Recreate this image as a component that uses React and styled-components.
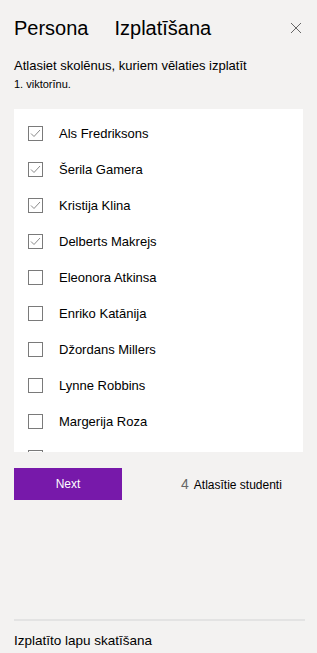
import styled, { createGlobalStyle } from 'styled-components';

const GlobalStyle = createGlobalStyle`
    html, body {
        margin: 0;
        padding: 0;
        background: #f3f2f1;
    }
    body {
        font-family: "Liberation Sans", Arial, sans-serif;
        color: #000;
    }
`;

const Panel = styled.div`
    width: 317px;
    height: 653px;
    box-sizing: border-box;
    background: #f3f2f1;
    display: flex;
    flex-direction: column;
    padding: 0 14px;
    overflow: hidden;
`;

const Header = styled.div`
    display: flex;
    align-items: center;
    height: 50px;
    box-sizing: border-box;
    padding-top: 6px;
`;

const Tab = styled.span`
    font-size: 20px;
    margin-right: 26px;
`;

const CloseButton = styled.button`
    margin-left: auto;
    margin-right: 1px;
    background: none;
    border: none;
    padding: 0;
    width: 12px;
    height: 12px;
    display: flex;
    cursor: pointer;
`;

const Intro = styled.p`
    font-size: 13px;
    margin: 7px 0 0;
    line-height: 18px;
`;

const Small = styled.p`
    font-size: 11px;
    margin: 0;
    line-height: 18px;
`;

const ListBox = styled.div`
    margin-top: 16px;
    height: 343px;
    flex-shrink: 0;
    background: #fff;
    overflow: hidden;
    padding-top: 6px;
    box-sizing: border-box;
`;

const Row = styled.label`
    display: flex;
    align-items: center;
    height: 36px;
    padding-left: 14px;
    font-size: 13px;
`;

const Box = styled.span`
    width: 15px;
    height: 15px;
    box-sizing: border-box;
    border: 1px solid #7a7a7a;
    margin-right: 16px;
    display: flex;
    align-items: center;
    justify-content: center;
`;

const Footer = styled.div`
    display: flex;
    align-items: center;
    margin-top: 16px;
`;

const NextButton = styled.button`
    width: 108px;
    height: 32px;
    background: #7719aa;
    color: #fff;
    border: none;
    font-family: inherit;
    font-size: 12px;
`;

const Count = styled.div`
    margin-left: 59px;
    font-size: 12px;
    display: flex;
    align-items: baseline;
`;

const Num = styled.span`
    color: #666;
    font-size: 14px;
    margin-right: 5px;
`;

const Bottom = styled.div`
    margin-top: auto;
    border-top: 2px solid #e3e3e3;
    margin-right: -2px;
    padding: 11px 0 0;
    height: 21px;
    line-height: 18px;
    font-size: 13.5px;
`;

const students = [
    { name: 'Als Fredriksons', checked: true },
    { name: 'Šerila Gamera', checked: true },
    { name: 'Kristija Klina', checked: true },
    { name: 'Delberts Makrejs', checked: true },
    { name: 'Eleonora Atkinsa', checked: false },
    { name: 'Enriko Katānija', checked: false },
    { name: 'Džordans Millers', checked: false },
    { name: 'Lynne Robbins', checked: false },
    { name: 'Margerija Roza', checked: false },
    { name: 'Miriama Grehema', checked: false },
];

function Check() {
    return (
        <svg width="11" height="9" viewBox="0 0 11 9">
            <path d="M1 4.5 L4 7.5 L10 1" fill="none" stroke="#8a8a8a" strokeWidth="1" />
        </svg>
    );
}

export default function App() {
    const selected = students.filter(s => s.checked).length;

    return (
        <>
            <GlobalStyle />
            <Panel>
                <Header>
                    <Tab>Persona</Tab>
                    <Tab>Izplatīšana</Tab>
                    <CloseButton aria-label="Close">
                        <svg width="12" height="12" viewBox="0 0 12 12">
                            <path d="M1 1 L11 11 M11 1 L1 11" stroke="#666" strokeWidth="1" />
                        </svg>
                    </CloseButton>
                </Header>
                <Intro>Atlasiet skolēnus, kuriem vēlaties izplatīt</Intro>
                <Small>1. viktorīnu.</Small>

                <ListBox>
                    {students.map(s => (
                        <Row key={s.name}>
                            <Box>{s.checked && <Check />}</Box>
                            {s.name}
                        </Row>
                    ))}
                </ListBox>

                <Footer>
                    <NextButton>Next</NextButton>
                    <Count>
                        <Num>{selected}</Num>
                        Atlasītie studenti
                    </Count>
                </Footer>

                <Bottom>Izplatīto lapu skatīšana</Bottom>
            </Panel>
        </>
    );
}
